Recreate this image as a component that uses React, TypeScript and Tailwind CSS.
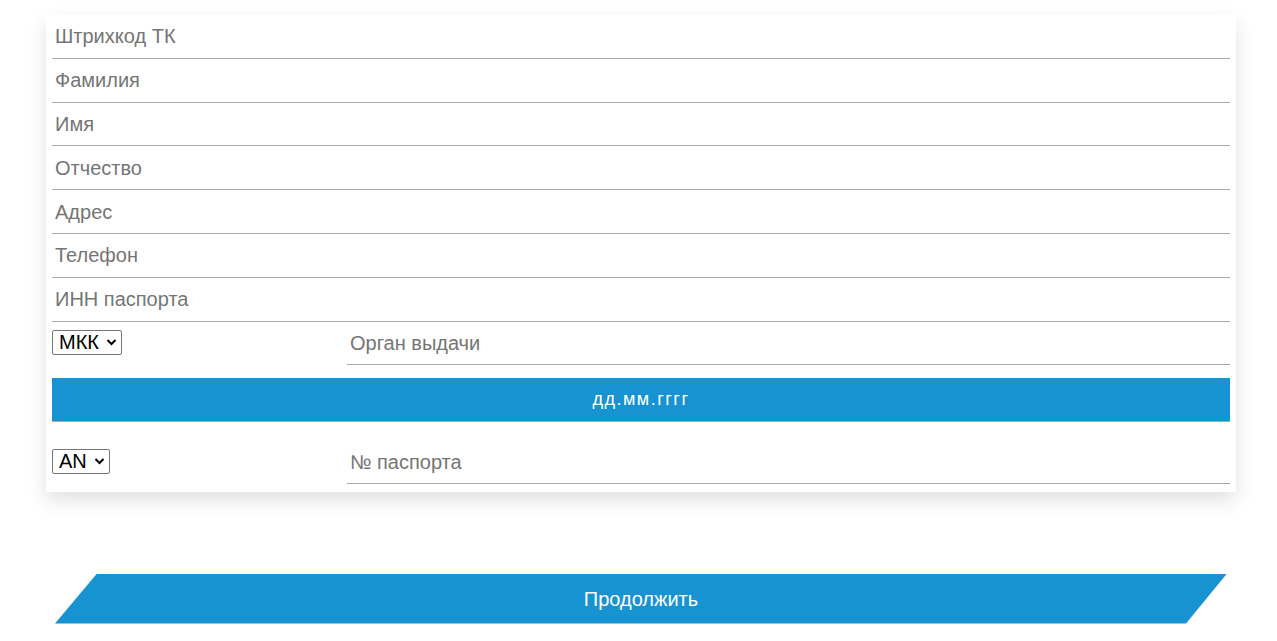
import React from "react";

const fields = ["Штрихкод ТК", "Фамилия", "Имя", "Отчество", "Адрес", "Телефон", "ИНН паспорта"];

function Chevron() {
  return (
    <svg width="11" height="8" viewBox="0 0 11 8" className="ml-[7px]">
      <path d="M1.5 2 L5.5 6 L9.5 2" fill="none" stroke="#000" strokeWidth="2" />
    </svg>
  );
}

function Sel({ label }: { label: string }) {
  return (
    <div className="inline-flex items-center h-[25px] border border-[#767676] rounded-[2px] pl-[6px] pr-[4px] text-[20px] text-black bg-white leading-none">
      <span>{label}</span>
      <Chevron />
    </div>
  );
}

export default function App() {
  return (
    <div className="w-[1277px] h-[641px] bg-white overflow-hidden" style={{ fontFamily: '"Liberation Sans", Arial, sans-serif' }}>
      <div className="pt-[15px] pl-[46px]">
        <div className="w-[1190px] bg-white px-[6px] pb-[8px] shadow-[0_8px_18px_rgba(0,0,0,0.12)]">
          {fields.map((f) => (
            <div key={f} className="h-[43.8px] border-b border-[#a9a9a9] flex items-center pl-[3px] text-[20px] text-[#757575]">
              {f}
            </div>
          ))}
          <div className="flex items-center h-[43px]">
            <div className="w-[295px]"><Sel label="МКК" /></div>
            <div className="flex-1 h-full border-b border-[#a9a9a9] flex items-center pl-[3px] text-[20px] text-[#757575]">Орган выдачи</div>
          </div>
          <div className="mt-[13px] h-[44px] bg-[#1793d1] border-b border-[#a9a9a9] flex items-center justify-center text-white text-[18px] tracking-[1.5px] font-medium">
            дд.мм.гггг
          </div>
          <div className="mt-[19px] flex items-center h-[43px]">
            <div className="w-[295px]"><Sel label="AN" /></div>
            <div className="flex-1 h-full border-b border-[#a9a9a9] flex items-center pl-[3px] text-[20px] text-[#757575]">№ паспорта</div>
          </div>
        </div>
      </div>
      <div className="mt-[82px] ml-[55px] w-[1172px] h-[50px] bg-[#1793d1] flex items-center justify-center text-white text-[20px] [clip-path:polygon(42px_0,100%_0,calc(100%-41px)_100%,0_100%)]">
        Продолжить
      </div>
    </div>
  );
}
